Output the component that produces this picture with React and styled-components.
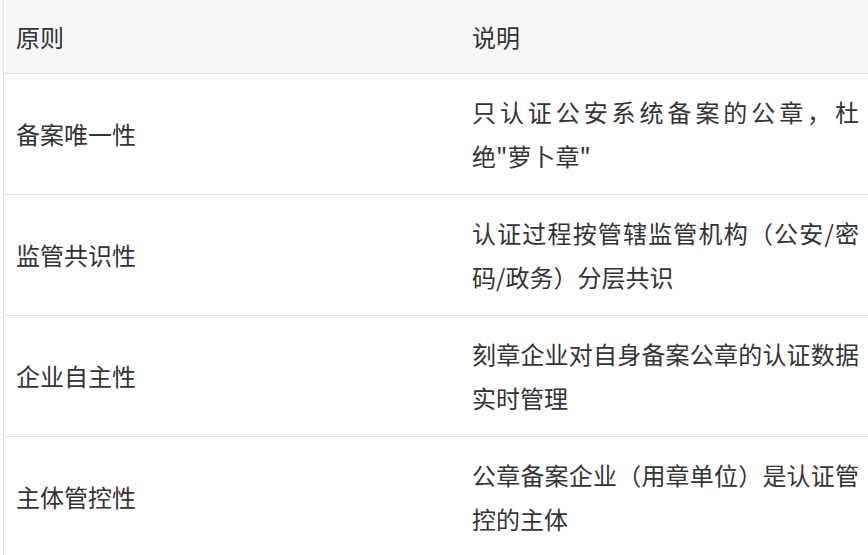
import { Fragment } from "react";
import styled, { createGlobalStyle } from "styled-components";

const GlobalStyle = createGlobalStyle`
  html, body {
    margin: 0;
    padding: 0;
    background: #ffffff;
    overflow: hidden;
  }
  body {
    font-family: "Noto Sans CJK SC", "Noto Sans", sans-serif;
    color: #333333;
  }
`;

const Table = styled.div`
  margin-left: 3px;
  width: 867px;
  border-left: 1px solid #e2e2e2;
  display: grid;
  grid-template-columns: 456px 1fr;
`;

const Cell = styled.div`
  display: flex;
  align-items: center;
  padding: ${(p) => (p.$head ? "15px 12px 14px" : "16px 12px")};
  background: ${(p) => (p.$head ? "#f6f6f6" : "#ffffff")};
  border-bottom: 1px solid #e2e2e2;
  font-size: 24px;
  line-height: 44px;
`;

const Text = styled.div`
  width: 100%;
  text-align: justify;
`;

const Keep = styled.span`
  white-space: nowrap;
`;

const rows = [
  {
    name: "备案唯一性",
    desc: (
      <>
        只认证公安系统备案的公章，杜<Keep>绝"萝</Keep>卜章"
      </>
    ),
  },
  { name: "监管共识性", desc: "认证过程按管辖监管机构（公安/密码/政务）分层共识" },
  { name: "企业自主性", desc: "刻章企业对自身备案公章的认证数据实时管理" },
  { name: "主体管控性", desc: "公章备案企业（用章单位）是认证管控的主体" },
];

export default function App() {
  return (
    <>
      <GlobalStyle />
      <Table>
        <Cell $head>原则</Cell>
        <Cell $head>说明</Cell>
        {rows.map((row) => (
          <Fragment key={row.name}>
            <Cell>{row.name}</Cell>
            <Cell>
              <Text>{row.desc}</Text>
            </Cell>
          </Fragment>
        ))}
      </Table>
    </>
  );
}
